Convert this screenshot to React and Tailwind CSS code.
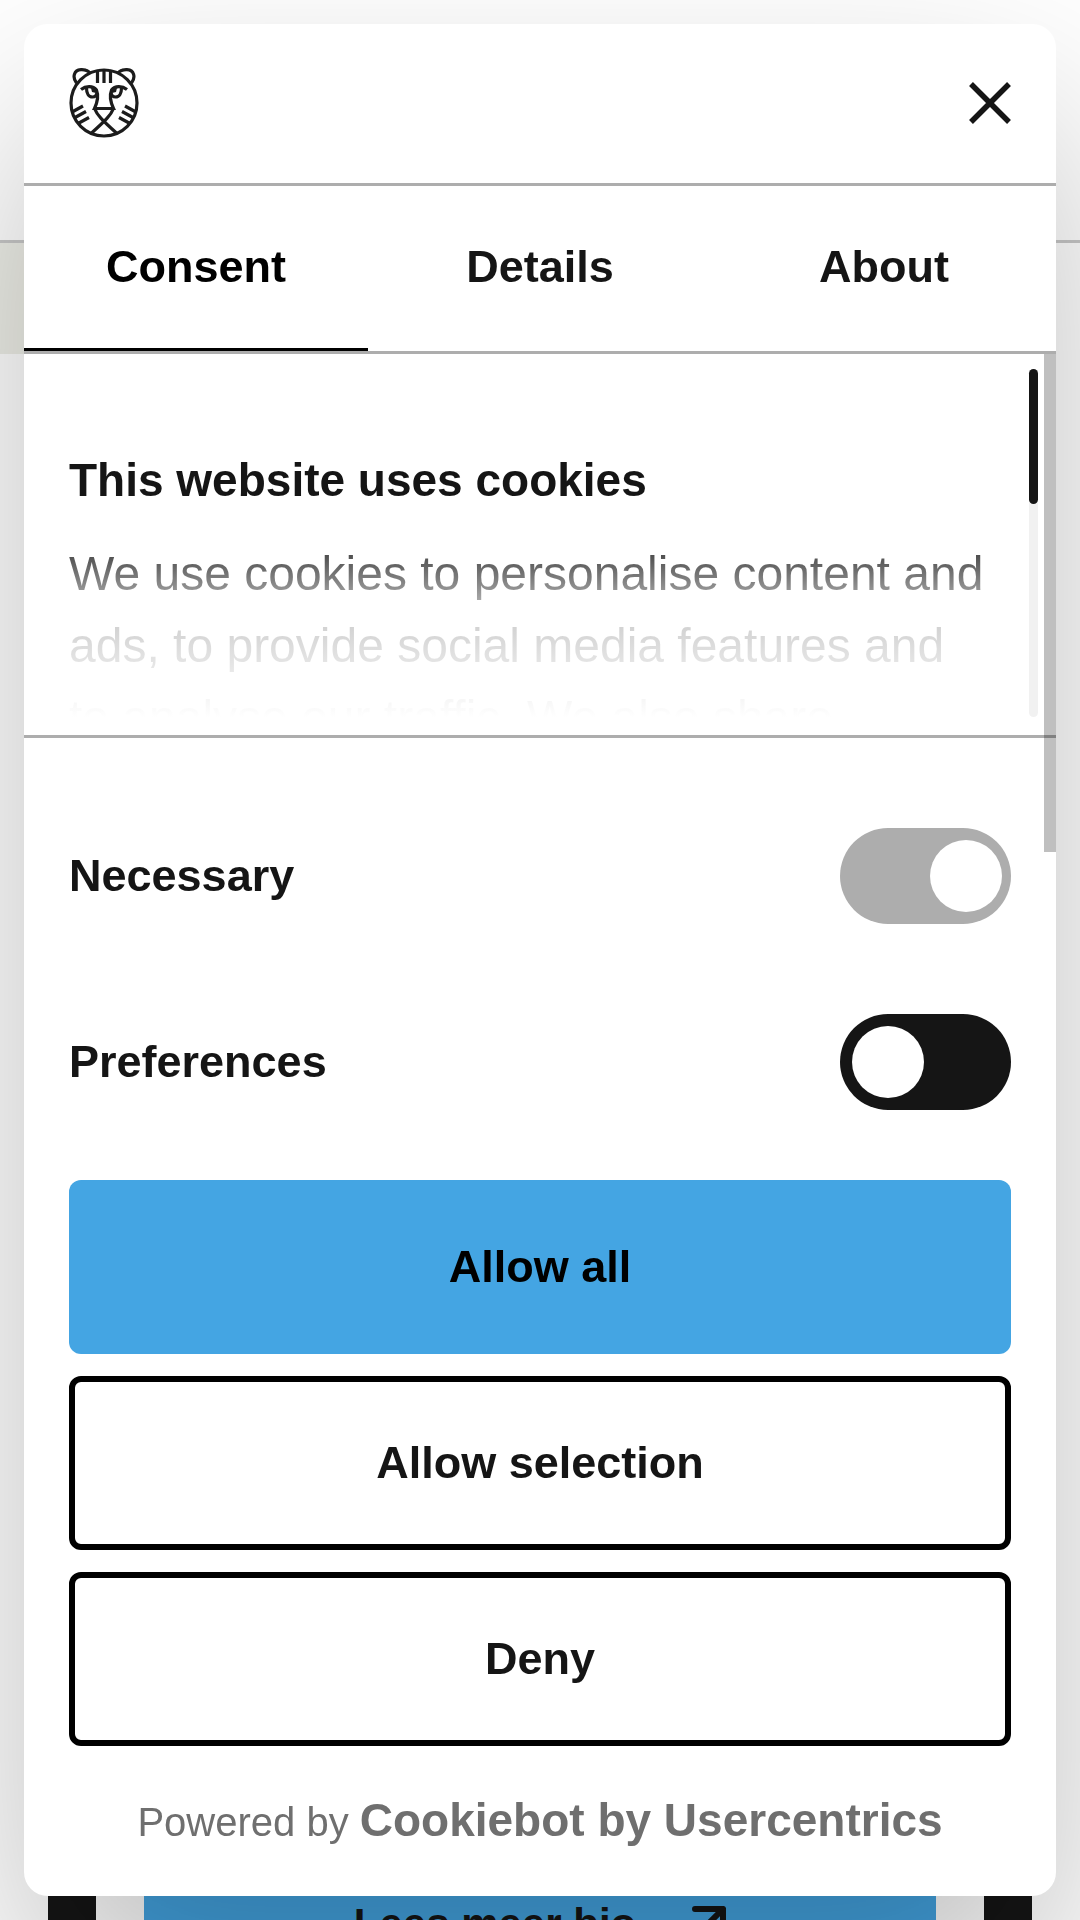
import React, { useState } from 'react';
import clsx from 'clsx';

const TABS = ['Consent', 'Details', 'About'];

const TigerLogo = () => (
    <svg viewBox="0 0 70 70" className="size-[70px]" fill="none" stroke="#1c1c1c" strokeWidth="3.2" aria-hidden="true">
        <circle cx="35" cy="35" r="33" />
        <path d="M7.500 15C3 9 5 2 12 1.700c4-.2 7 1 9 3.300M62.500 15C67 9 65 2 58 1.700c-4-.2-7 1-9 3.300" />
        <path d="M28.500 3v12M35 2v13M41.500 3v12" />
        <path d="M12 21.500c5-4 12-4 15.500.5 2 5 1 12-2 18.500h19c-3-6.500-4-13.500-2-18.500 3.500-4.500 10.500-4.500 15.500-.5" />
        <path d="M17.500 20c0 5 2 9 6 9 2.500 0 4-1.500 4.500-4M52.500 20c0 5-2 9-6 9-2.500 0-4-1.500-4.500-4" />
        <path d="M22 20l5 1v4l-4-1zM48 20l-5 1v4l4-1z" fill="#1c1c1c" stroke="none" />
        <path d="M25.500 40.500C28 47 33 52 48 65.500M44.500 40.500C42 47 37 52 22 65.500" />
        <path d="M4 43.500l10-5.500M6 49.500l11-6M9 55.500l11-6M66 43.500L56 38M64 49.500l-11-6M61 55.500l-11-6" />
    </svg>
);

const CloseIcon = () => (
    <svg viewBox="0 0 42 42" className="size-[42px]" fill="none" stroke="#151515" strokeWidth="5.500" aria-hidden="true">
        <path d="M2 2l38 38M40 2L2 40" />
    </svg>
);

const ArrowIcon = () => (
    <svg viewBox="0 0 34 34" className="mt-[14px] size-[34px] shrink-0" fill="none" stroke="#151515" strokeWidth="6" strokeLinecap="round" strokeLinejoin="round" aria-hidden="true">
        <path d="M3 3h28v28M31 3L3 31" />
    </svg>
);

const Toggle = ({ id, label, checked, disabled, onChange }) => (
    <div className="flex items-center justify-between">
        <label htmlFor={id} className="font-bold">{label}</label>
        <input
            id={id}
            type="checkbox"
            role="switch"
            checked={checked}
            disabled={disabled}
            onChange={onChange}
            className="h-24 w-[171px] shrink-0 appearance-none rounded-full bg-[#151515] p-3 before:block before:size-[72px] before:rounded-full before:bg-white before:content-[''] checked:before:ml-[78px] disabled:bg-[#adadad]"
        />
    </div>
);

const Backdrop = () => (
    <div className="flex h-screen flex-col overflow-hidden bg-white">
        <div className="h-[243px] border-b-3 border-[#c8c8c8]" />
        <div className="flex h-[111px] bg-white">
            <div className="w-1/2 bg-[#eeefe8]" />
        </div>
        <div className="mx-12 mt-auto h-20 overflow-hidden border-x-48 border-[#151515] px-12 pt-10">
            <a
                href="#bio"
                className="flex h-32 w-full items-start justify-center gap-14 bg-[#44a5e3] pt-3 text-[42px] leading-[64px] font-bold text-[#151515]"
            >
                Lees meer bio
                <ArrowIcon />
            </a>
        </div>
    </div>
);

export default function App() {
    const [tab, setTab] = useState('Consent');
    const [preferences, setPreferences] = useState(false);

    return (
        <div className="font-['Liberation_Sans',Arial,sans-serif] text-[45px] leading-[72px] text-[#151515]">
            <Backdrop />

            <div
                role="dialog"
                aria-label="This website uses cookies"
                className="fixed inset-6 flex flex-col overflow-hidden rounded-3xl bg-white shadow-[0_96px_204px_rgba(0,0,0,0.26)]"
            >
                <header className="flex h-[162px] shrink-0 items-center justify-between border-b-3 border-[#adadad] px-[45px] pb-[2px]">
                    <TigerLogo />
                    <button type="button" aria-label="Close">
                        <CloseIcon />
                    </button>
                </header>

                <nav className="grid h-[168px] shrink-0 grid-cols-3 border-b-3 border-[#adadad]">
                    {TABS.map(name => (
                        <button
                            key={name}
                            type="button"
                            onClick={() => setTab(name)}
                            className={clsx('border-b-3 font-bold', tab === name ? 'border-black text-black' : 'border-transparent')}
                        >
                            {name}
                        </button>
                    ))}
                </nav>

                <div className="relative min-h-0 flex-1 overflow-hidden">
                    {/* COOKIE TEXT */}
                    <section className="flex h-[384px] border-b-3 border-[#adadad] pt-[15px] pr-[18px] pb-[18px] pl-[45px]">
                        <div className="relative flex-1 overflow-hidden pt-[75px] pr-9">
                            <h1 className="mb-[22px] text-[46px] font-bold">This website uses cookies</h1>
                            <p className="text-[48px]">
                                We use cookies to personalise content and ads, to provide social media features and to analyse our traffic. We also share
                            </p>
                            {/* Fade towards the cut-off line */}
                            <div className="absolute inset-x-0 bottom-0 h-48 bg-linear-to-t from-white via-white/80 to-transparent" />
                        </div>
                        <div className="w-[9px] shrink-0 rounded-full bg-[#f1f1f1]">
                            <div className="h-[135px] rounded-full bg-[#151515]" />
                        </div>
                    </section>

                    {/* CATEGORIES */}
                    <section className="flex flex-col gap-[90px] px-[45px] pt-[90px]">
                        <Toggle id="necessary" label="Necessary" checked disabled />
                        <Toggle
                            id="preferences"
                            label="Preferences"
                            checked={preferences}
                            onChange={() => setPreferences(!preferences)}
                        />
                    </section>

                    <div className="absolute top-0 right-0 h-[498px] w-3 bg-black/25" />
                </div>

                <footer className="flex shrink-0 flex-col gap-[22px] px-[45px] pb-[38px]">
                    <button type="button" className="h-[174px] rounded-xl bg-[#44a5e3] font-bold text-black">Allow all</button>
                    <button type="button" className="h-[174px] rounded-xl border-6 border-black font-bold">Allow selection</button>
                    <button type="button" className="h-[174px] rounded-xl border-6 border-black font-bold">Deny</button>
                    <a href="#cookiebot" className="mt-4 text-center text-[40px] text-[#6f6f6f]">
                        Powered by <span className="text-[46px] font-bold">Cookiebot by Usercentrics</span>
                    </a>
                </footer>
            </div>
        </div>
    );
}
